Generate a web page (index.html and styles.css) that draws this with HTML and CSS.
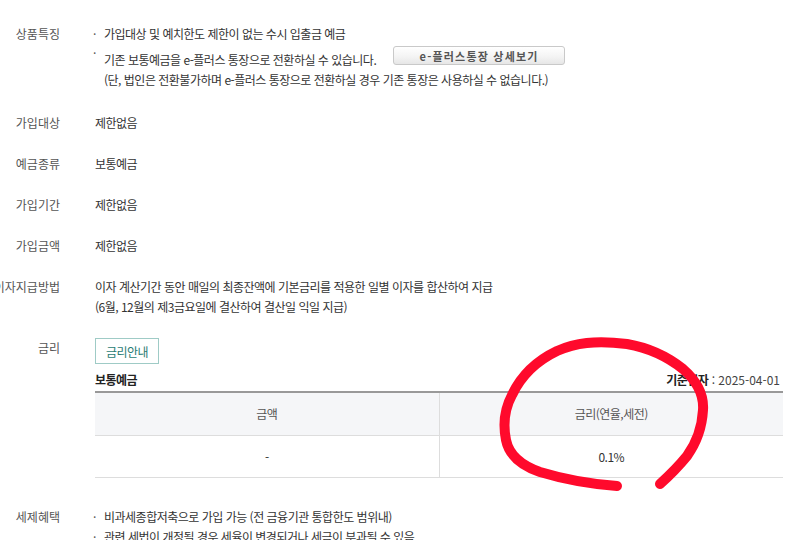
FILE: index.html
```html
<!DOCTYPE html>
<html lang="ko">
<head>
<meta charset="utf-8">
<title>보통예금 상품안내</title>
<link rel="stylesheet" href="styles.css">
</head>
<body>
<div class="page">
  <div class="row">
    <div class="label"><span>상품특징</span></div>
    <div class="value">
      <ul class="bullets">
        <li>가입대상 및 예치한도 제한이 없는 수시 입출금 예금</li>
        <li class="with-btn">기존 보통예금을 e-플러스 통장으로 전환하실 수 있습니다. <button class="detail-btn" type="button">e-플러스통장 상세보기</button></li>
      </ul>
      <p class="note">(단, 법인은 전환불가하며 e-플러스 통장으로 전환하실 경우 기존 통장은 사용하실 수 없습니다.)</p>
    </div>
  </div>
  <div class="row">
    <div class="label"><span>가입대상</span></div>
    <div class="value">제한없음</div>
  </div>
  <div class="row">
    <div class="label"><span>예금종류</span></div>
    <div class="value">보통예금</div>
  </div>
  <div class="row">
    <div class="label"><span>가입기간</span></div>
    <div class="value">제한없음</div>
  </div>
  <div class="row">
    <div class="label"><span>가입금액</span></div>
    <div class="value">제한없음</div>
  </div>
  <div class="row">
    <div class="label"><span>이자지급방법</span></div>
    <div class="value">이자 계산기간 동안 매일의 최종잔액에 기본금리를 적용한 일별 이자를 합산하여 지급<br>(6월, 12월의 제3금요일에 결산하여 결산일 익일 지급)</div>
  </div>
  <div class="row row-rate">
    <div class="label"><span>금리</span></div>
    <div class="value">
      <button class="rate-btn" type="button">금리안내</button>
      <div class="rate-head">
        <strong>보통예금</strong>
        <span class="base-date"><b>기준일자</b> : 2025-04-01</span>
      </div>
      <table class="rate-table">
        <thead>
          <tr><th>금액</th><th>금리(연율,세전)</th></tr>
        </thead>
        <tbody>
          <tr><td>-</td><td>0.1%</td></tr>
        </tbody>
      </table>
    </div>
  </div>
  <div class="row">
    <div class="label"><span>세제혜택</span></div>
    <div class="value">
      <ul class="bullets">
        <li>비과세종합저축으로 가입 가능 (전 금융기관 통합한도 범위내)</li>
        <li>관련 세법이 개정될 경우 세율이 변경되거나 세금이 부과될 수 있음</li>
      </ul>
    </div>
  </div>
</div>
<svg class="annotation" width="793" height="540" viewBox="0 0 793 540" aria-hidden="true">
  <path d="M617 486 C590 484 563 479 540 472 C520 465 509 455 506 440 C503 425 504 410 512 395 C520 378 534 362 557 351 C575 343 595 340 627 344 C650 348 668 357 683 369 C698 382 704 395 703 410 C702 428 697 442 687 456 C678 467 670 475 660 484" fill="none" stroke="#ff0a2c" stroke-width="10" stroke-linecap="round" stroke-linejoin="round"/>
</svg>
</body>
</html>
```
FILE: styles.css
```css
html, body {
  margin: 0;
  padding: 0;
  background: #fff;
}

body {
  width: 793px;
  height: 540px;
  overflow: hidden;
  position: relative;
  font-family: "Noto Sans CJK KR", "Noto Sans", sans-serif;
  font-size: 12px;
  line-height: 20px;
  letter-spacing: -0.5px;
  color: #333;
}

.page {
  padding: 24px 10px 0 0;
}

.row {
  display: flex;
  gap: 35px;
  margin-bottom: 21px;
}

.label {
  flex: 0 0 60px;
  min-width: 0;
  display: flex;
  justify-content: flex-end;
  color: #555;
  white-space: nowrap;
  letter-spacing: 0;
}

.value {
  flex: 1;
  min-width: 0;
  color: #333;
}

.bullets {
  list-style: none;
  margin: 0;
  padding: 0;
}

.bullets li {
  position: relative;
  padding-left: 9px;
}

.bullets li::before {
  content: "·";
  position: absolute;
  left: -2px;
  top: 0;
  color: #555;
}

.bullets li.with-btn {
  padding-top: 6px;
}

.bullets li.with-btn::before {
  top: -1px;
}

.note {
  margin: 0 0 2px;
  padding-left: 9px;
}

.detail-btn {
  display: inline-block;
  vertical-align: top;
  margin: -4px 0 0 14px;
  width: 172px;
  height: 19px;
  padding: 0;
  border: 1px solid #c9c9c9;
  border-radius: 3px;
  background: linear-gradient(#ffffff, #f3f3f3 60%, #e6e6e6);
  font-family: "Noto Sans CJK KR", sans-serif;
  font-size: 11px;
  font-weight: bold;
  line-height: 16px;
  letter-spacing: 1.2px;
  color: #555;
}

.rate-btn {
  display: block;
  height: 26px;
  padding: 0 10px;
  border: 1px solid #9fcbc6;
  background: #fff;
  font-family: "Noto Sans CJK KR", sans-serif;
  font-size: 12px;
  letter-spacing: -0.5px;
  color: #2a7c74;
}

.rate-head {
  display: flex;
  justify-content: space-between;
  margin-top: 6px;
  padding-right: 3px;
  color: #222;
}

.rate-head strong {
  font-weight: bold;
}

.base-date {
  color: #444;
  letter-spacing: 0;
}

.base-date b {
  color: #222;
  letter-spacing: -0.5px;
}

.rate-table {
  width: 100%;
  margin-top: 1px;
  border-collapse: collapse;
  border-top: 2px solid #999;
  text-align: center;
}

.rate-table th {
  width: 50%;
  height: 42px;
  padding: 0;
  background: #f5f6f8;
  font-weight: normal;
  color: #555;
  border-bottom: 1px solid #ddd;
}

.rate-table td {
  height: 41px;
  padding: 0;
  color: #333;
  border-bottom: 1px solid #ddd;
}

.rate-table th + th,
.rate-table td + td {
  border-left: 1px solid #ddd;
}

.row-rate {
  margin-bottom: 29px;
}

.annotation {
  position: absolute;
  left: 0;
  top: 0;
  pointer-events: none;
}
```
